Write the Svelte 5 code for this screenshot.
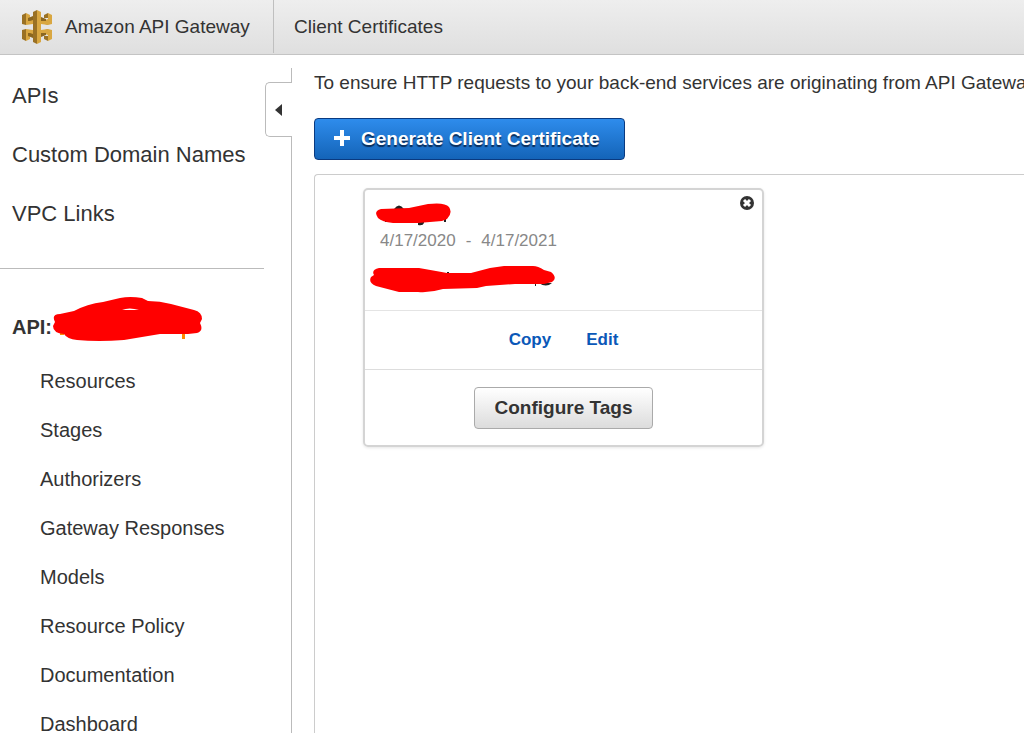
<script lang="ts">
	const sections = ['APIs', 'Custom Domain Names', 'VPC Links'];

	const apiLinks = [
		'Resources',
		'Stages',
		'Authorizers',
		'Gateway Responses',
		'Models',
		'Resource Policy',
		'Documentation',
		'Dashboard',
	];

	let showCard = $state(true);
</script>

<div class="app">
	<header class="topbar">
		<a class="brand" href="#home">
			<svg class="logo" viewBox="0 0 32 36" width="32" height="36" aria-hidden="true">
				<path fill="#9a7124" d="M1 6l4-2v12l-4-1zM1 21l4-1v12l-4-2z" />
				<path fill="#d9a741" d="M5 4l4 2v3h3v6l-7 1zM5 20l7 1v6H9v3l-4 2z" />
				<path fill="#8b6620" d="M7 9l5-2v4l-3 1H7zM7 24h2l3 1v4l-5-2z" />
				<path fill="#9a7124" d="M23 6l4-2v5h-3v3h3v4l-3-1V9h-1zM23 30l4 2v-5h-3v-3h3v-4l-3 1v6h-1z" />
				<path fill="#d9a741" d="M27 4l4 2v9l-4 1-7-1v-5l4 1 3-1zM27 32l4-2v-9l-4-1-7 1v5l4-1 3 1z" />
				<path fill="#8b6620" d="M20 8l5 2v2h-5zM20 24h5v2l-5 2z" />
				<path fill="#9a7124" d="M12 3l4-2v34l-4-2z" />
				<path fill="#d9a741" d="M16 1l4 2v30l-4 2z" />
			</svg>
			Amazon API Gateway
		</a>
		<div class="crumb">Client Certificates</div>
	</header>

	<div class="body">
		<aside class="sidebar">
			<nav class="sections">
				{#each sections as section}
					<a href="#{section}">{section}</a>
				{/each}
			</nav>

			<div class="api-title">
				<span>API:</span>
				<svg class="api-mark" viewBox="0 0 152 46" width="152" height="46" aria-hidden="true">
					<path fill="#f80" d="M8 35h4v3H8zM130 34h3v8h-3z" />
					<path fill="#f00" d="M8 17L22 14Q35 7 51 5L68 1Q78-1 90 1L96 4Q108 4 119 7L142 13Q150 15 150 22L148 26Q152 34 145 36L136 37H108L72 43Q46 45 25 43Q15 42 12 37Q1 36 1 29L3 25Q-1 17 8 17z" />
					<path fill="#fff" d="M70 13q7-3 17 0z" />
				</svg>
			</div>

			<nav class="api-links">
				{#each apiLinks as link}
					<a href="#{link}">{link}</a>
				{/each}
			</nav>
		</aside>

		<div class="rail">
			<button class="collapse" type="button" aria-label="Collapse navigation">
				<svg viewBox="0 0 8 12" width="8" height="12" aria-hidden="true">
					<path fill="#333" d="M7 0v12L0 6z" />
				</svg>
			</button>
		</div>

		<main>
			<p class="intro">
				To ensure HTTP requests to your back-end services are originating from API Gateway, you can use client certificates.
			</p>

			<button class="primary" type="button">
				<svg viewBox="0 0 18 18" width="18" height="18" aria-hidden="true">
					<path fill="#fff" d="M7 0h4v6h6v4h-6v6H7v-6H1V6h6z" />
				</svg>
				Generate Client Certificate
			</button>

			<div class="panel">
				{#if showCard}
					<section class="card">
						<button class="close" type="button" aria-label="Delete certificate" onclick={() => (showCard = false)}>
							<svg viewBox="0 0 16 16" width="16" height="16">
								<circle cx="8" cy="8" r="7" fill="#333" />
								<path stroke="#fff" stroke-width="3" d="M5 5l6 6M11 5l-6 6" />
							</svg>
						</button>
						<div class="details">
							<svg class="name-mark" viewBox="0 0 78 24" width="78" height="24" aria-hidden="true">
								<path fill="#222" d="M19 6q5-7 10 0zM43 18h6v2q-1 3-6 2zM69 15h2v4h-2zM10 15h3v4h-3z" />
								<path fill="#f00" d="M6 6L34 5 53 1Q70-1 74 4Q78 10 72 16L67 18 43 20H18Q7 19 3 15Q-2 8 6 6z" />
							</svg>
							<div class="dates">
								<span>4/17/2020</span><span>-</span><span>4/17/2021</span>
							</div>
							<svg class="id-mark" viewBox="0 0 186 28" width="186" height="28" aria-hidden="true">
								<path fill="#222" d="M77 7h2v3h-2zM165 18h1v3h-1zM169 18h13q-6 5-13 0z" />
								<path fill="#f00" d="M9 3H49L66 6 77 8H101L120 3 134 1H163Q168 1 174 5L181 7Q188 13 182 17L174 19H145L116 21 107 23 73 24Q60 28 48 27H29L6 21Q-2 18 1 12L4 10Q1 5 9 3z" />
							</svg>
						</div>
						<div class="actions">
							<a href="#copy">Copy</a>
							<a href="#edit">Edit</a>
						</div>
						<div class="tags">
							<button class="secondary" type="button">Configure Tags</button>
						</div>
					</section>
				{/if}
			</div>
		</main>
	</div>
</div>

<style>
	:global(body) {
		margin: 0;
		background: #fff;
	}

	.app {
		display: flex;
		flex-direction: column;
		height: 100vh;
		overflow: hidden;
		font-family: 'Liberation Sans', Arial, sans-serif;
		font-size: 19px;
		color: #333;
	}

	.app * {
		box-sizing: border-box;
	}

	a {
		color: inherit;
		text-decoration: none;
	}

	button {
		font-family: inherit;
		cursor: pointer;
	}

	svg {
		display: block;
		flex-shrink: 0;
	}

	.topbar {
		display: flex;
		flex-shrink: 0;
		height: 55px;
		padding-bottom: 1px;
		border-bottom: 1px solid #c4c4c4;
		background: linear-gradient(#eee, #dfdfdf);
		white-space: nowrap;
	}

	.brand {
		display: flex;
		align-items: center;
		gap: 12px;
		width: 274px;
		padding-left: 21px;
		border-right: 1px solid #bfbfbf;
	}

	.crumb {
		display: flex;
		align-items: center;
		padding-left: 20px;
	}

	.body {
		display: flex;
		flex: 1;
		min-height: 0;
	}

	.sidebar {
		flex: 0 0 264px;
		overflow: hidden;
	}

	.sections {
		display: flex;
		flex-direction: column;
		gap: 33px;
		padding: 28px 12px 41px;
		border-bottom: 1px solid #bbb;
		font-size: 22px;
		line-height: 26px;
		white-space: nowrap;
	}

	.api-title {
		position: relative;
		padding: 44px 12px 16px;
		font-size: 20px;
		font-weight: bold;
		line-height: 28px;
	}

	.api-mark {
		position: absolute;
		top: 28px;
		left: 52px;
	}

	.api-links {
		display: flex;
		flex-direction: column;
		padding-left: 40px;
		font-size: 20px;
		line-height: 49px;
	}

	.rail {
		position: relative;
		flex: 0 0 28px;
		margin-top: 13px;
		border-right: 1px solid #bbb;
	}

	.collapse {
		position: absolute;
		top: 14px;
		right: -1px;
		display: flex;
		align-items: center;
		width: 27px;
		height: 55px;
		padding: 0 0 0 9px;
		border: 1px solid #bbb;
		border-right: 0;
		border-radius: 5px 0 0 5px;
		background: #fff;
	}

	main {
		display: flex;
		flex: 1;
		flex-direction: column;
		align-items: flex-start;
		min-width: 0;
		padding: 16px 0 0 22px;
		overflow: hidden;
	}

	.intro {
		margin: 0 0 23px;
		line-height: 24px;
		white-space: nowrap;
	}

	.primary {
		display: flex;
		align-items: center;
		gap: 10px;
		height: 42px;
		padding: 0 24px 0 18px;
		border: 1px solid #0a3a80;
		border-radius: 4px;
		background: linear-gradient(#2e8cec, #1464b8);
		color: #fff;
		font-size: 19px;
		font-weight: bold;
		text-shadow: 0 2px 1px #0a2c58;
	}

	.panel {
		flex: 1;
		align-self: stretch;
		margin-top: 14px;
		padding: 13px 48px;
		border: solid #ccc;
		border-width: 1px 0 0 1px;
		border-radius: 4px 0 0;
	}

	.card {
		position: relative;
		width: 401px;
		border: 2px solid #d4d4d4;
		border-radius: 5px;
		box-shadow: 0 1px 3px rgba(0, 0, 0, 0.1);
	}

	.close {
		position: absolute;
		top: 5px;
		right: 7px;
		padding: 0;
		border: 0;
		background: none;
	}

	.details {
		padding: 13px 5px 17px;
		border-bottom: 1px solid #e4e4e4;
	}

	.name-mark {
		margin-left: 5px;
	}

	.dates {
		display: flex;
		gap: 10px;
		margin: 3px 0 13px;
		padding-left: 10px;
		color: #888;
		font-size: 17px;
		line-height: 22px;
	}

	.actions {
		display: flex;
		justify-content: center;
		gap: 35px;
		border-bottom: 1px solid #ddd;
		color: #0a58b8;
		font-size: 17px;
		font-weight: bold;
		line-height: 58px;
	}

	.tags {
		display: flex;
		justify-content: center;
		padding: 17px 0 16px;
	}

	.secondary {
		height: 42px;
		padding: 0 20px;
		border: 1px solid #aaa;
		border-radius: 4px;
		background: linear-gradient(#fff, #dcdcdc);
		color: #333;
		font-size: 19px;
		font-weight: bold;
	}
</style>
